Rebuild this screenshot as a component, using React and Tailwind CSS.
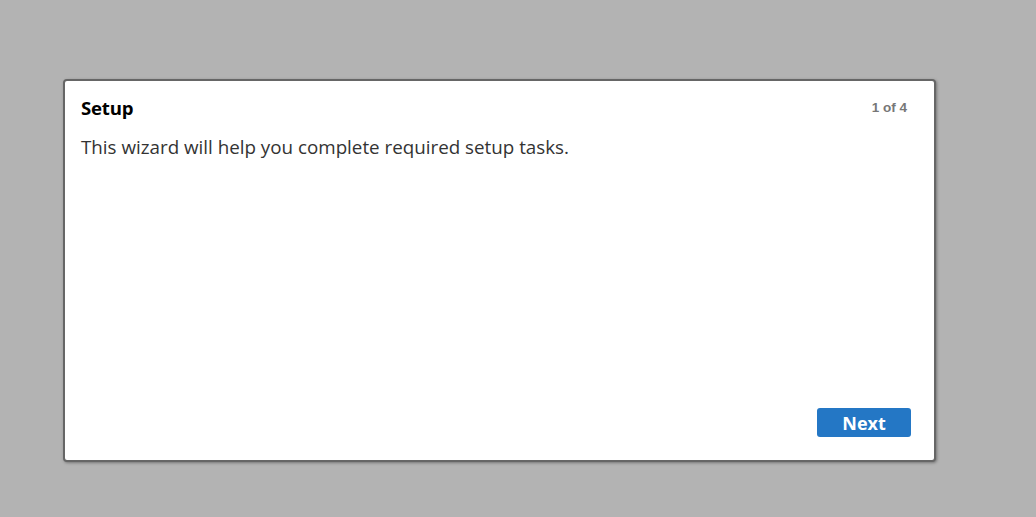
import React from 'react';

export default function App() {
  return (
    <div className="min-h-screen w-full bg-[#b3b3b3] pt-[79px] pl-[63px]" style={{ fontFamily: '"Open Sans", sans-serif' }}>
      <div className="w-[873px] h-[383px] bg-white border-2 border-[#666] rounded-[4px] shadow-[1px_1px_3px_rgba(0,0,0,0.35)] flex flex-col px-[16px] pt-[15px] pb-[23px]">
        <div className="flex items-start justify-between">
          <h1 className="text-[18.6px] leading-[24px] font-bold text-black tracking-[-0.2px]">Setup</h1>
          <span className="text-[13.5px] leading-[24px] font-bold text-[#777] mr-[11px]" style={{ fontFamily: '"Liberation Sans", Arial, sans-serif' }}>1 of 4</span>
        </div>
        <p className="mt-[15px] text-[18.8px] leading-[24px] text-[#333]">
          This wizard will help you complete required setup tasks.
        </p>
        <div className="flex-1" />
        <div className="flex justify-end">
          <button className="w-[94px] h-[29px] mr-[7px] rounded-[3px] bg-[#2477c5] text-white text-[18px] font-bold leading-none">
            Next
          </button>
        </div>
      </div>
    </div>
  );
}
